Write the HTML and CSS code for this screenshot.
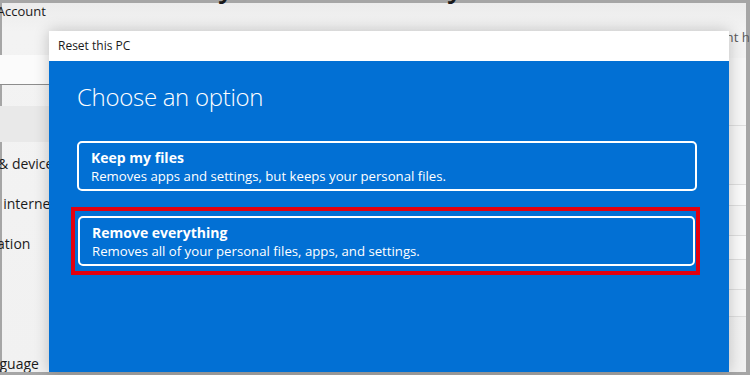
FILE: index.html
```html
<!DOCTYPE html>
<html lang="en">
<head>
    <meta charset="UTF-8">
    <meta name="viewport" content="width=device-width, initial-scale=1.0">
    <title>Reset this PC</title>
    <link rel="stylesheet" href="styles.css">
</head>
<body>
    <div class="screen">
        <!-- Settings window behind the dialog -->
        <div class="window">
            <aside class="sidebar">
                <div class="account">Local Account</div>
                <div class="search">Find a setting</div>
                <nav class="nav">
                    <div class="nav-item active">System</div>
                    <div class="nav-item">Bluetooth &amp; devices</div>
                    <div class="nav-item">Network &amp; internet</div>
                    <div class="nav-item">Personalization</div>
                    <div class="nav-item">Apps</div>
                    <div class="nav-item">Accounts</div>
                    <div class="nav-item">Time &amp; language</div>
                </nav>
            </aside>

            <main class="main">
                <h1 class="page-title">System&nbsp; ›&nbsp; Recovery</h1>
                <p class="page-desc">If you're having problems with your PC or want to reset it, these recovery options might help.</p>
                <div class="rows">
                    <div class="row r1"></div>
                    <div class="row r2"></div>
                    <div class="row r3"></div>
                    <div class="row r4"></div>
                    <div class="row r5"></div>
                    <div class="row r6"></div>
                    <div class="row r7"></div>
                </div>
            </main>
        </div>

        <!-- Reset dialog -->
        <div class="dialog">
            <div class="dialog-title">Reset this PC</div>
            <div class="dialog-body">
                <h2 class="choose">Choose an option</h2>
                <div class="options">
                    <div class="option">
                        <div class="option-name">Keep my files</div>
                        <div class="option-desc">Removes apps and settings, but keeps your personal files.</div>
                    </div>
                    <div class="highlight">
                        <div class="option">
                            <div class="option-name">Remove everything</div>
                            <div class="option-desc">Removes all of your personal files, apps, and settings.</div>
                        </div>
                    </div>
                </div>
            </div>
        </div>
    </div>
</body>
</html>
```

FILE: styles.css
```css
* {
    margin: 0;
    padding: 0;
    box-sizing: border-box;
}

body {
    font-family: 'Open Sans', 'Noto Sans', Arial, sans-serif;
    background: #a6a6a6;
    width: 750px;
    height: 375px;
    overflow: hidden;
}

.screen {
    position: relative;
    width: 750px;
    height: 375px;
    padding: 3px 4px 3px 2px;
    background: #a6a6a6;
}

.window {
    display: flex;
    height: 100%;
    background: linear-gradient(180deg, #ececec 0%, #f3f3f3 8%, #f1f1f1 100%);
}

/* sidebar */
.sidebar {
    width: 250px;
    margin-left: -74px;
    flex-shrink: 0;
    overflow: hidden;
    color: #1b1b1b;
}

.account {
    font-size: 13px;
    line-height: 16px;
    padding-left: 34px;
    height: 16px;
    color: #1a1a1a;
}

.search {
    margin: 36px 12px 0 0;
    height: 30px;
    background: #fbfbfb;
    border-bottom: 1px solid #8d8d8d;
    color: transparent;
    font-size: 13px;
}

.nav {
    margin-top: 21px;
    display: flex;
    flex-direction: column;
    gap: 4px;
}

.nav-item {
    height: 36px;
    line-height: 36px;
    font-size: 14px;
    padding-left: 2px;
    color: #1b1b1b;
    white-space: nowrap;
}

.nav-item.active {
    background: #e9e9e9;
    color: transparent;
}

/* main area */
.main {
    flex: 1;
    padding-left: 25px;
    min-width: 0;
}

.page-title {
    font-size: 28px;
    font-weight: 600;
    line-height: 34px;
    margin-top: -34px;
    color: #1a1a1a;
    white-space: nowrap;
}

.page-desc {
    font-size: 13.2px;
    line-height: 18px;
    color: #5a5a5a;
    white-space: nowrap;
    margin-top: 25px;
}

.rows {
    margin-top: 12px;
    margin-left: 300px;
}

.row {
    border-bottom: 1px solid #dedede;
    background: #f6f6f6;
}

.r1 { height: 68px; }
.r2 { height: 59px; }
.r3 { height: 21px; background: #fafafa; }
.r4 { height: 30px; }
.r5 { height: 24px; background: #fafafa; }
.r6 { height: 30px; }
.r7 { height: 27px; }

/* dialog */
.dialog {
    position: absolute;
    left: 49px;
    top: 31px;
    width: 680px;
    height: 341px;
    display: flex;
    flex-direction: column;
    box-shadow: 0 0 14px rgba(0, 0, 0, 0.22);
}

.dialog-title {
    height: 30px;
    background: #ffffff;
    font-size: 12px;
    line-height: 30px;
    padding-left: 9px;
    color: #1a1a1a;
}

.dialog-body {
    flex: 1;
    background: #0270d4;
    padding: 20px 32px 0 28px;
    color: #ffffff;
}

.choose {
    font-size: 24px;
    font-weight: 300;
    line-height: 32px;
    letter-spacing: -0.3px;
}

.options {
    margin-top: 28px;
    display: flex;
    flex-direction: column;
    gap: 16px;
}

.option {
    border: 2px solid #ffffff;
    border-radius: 5px;
    padding: 6px 12px 4px;
}

.option-name {
    font-size: 14px;
    font-weight: 700;
    line-height: 18px;
}

.option-desc {
    font-size: 13.2px;
    line-height: 18px;
}

.highlight {
    border: 4px solid #e3000f;
    padding: 5px 1px 5px 3px;
    margin: 0 -3px 0 -6px;
}
```
